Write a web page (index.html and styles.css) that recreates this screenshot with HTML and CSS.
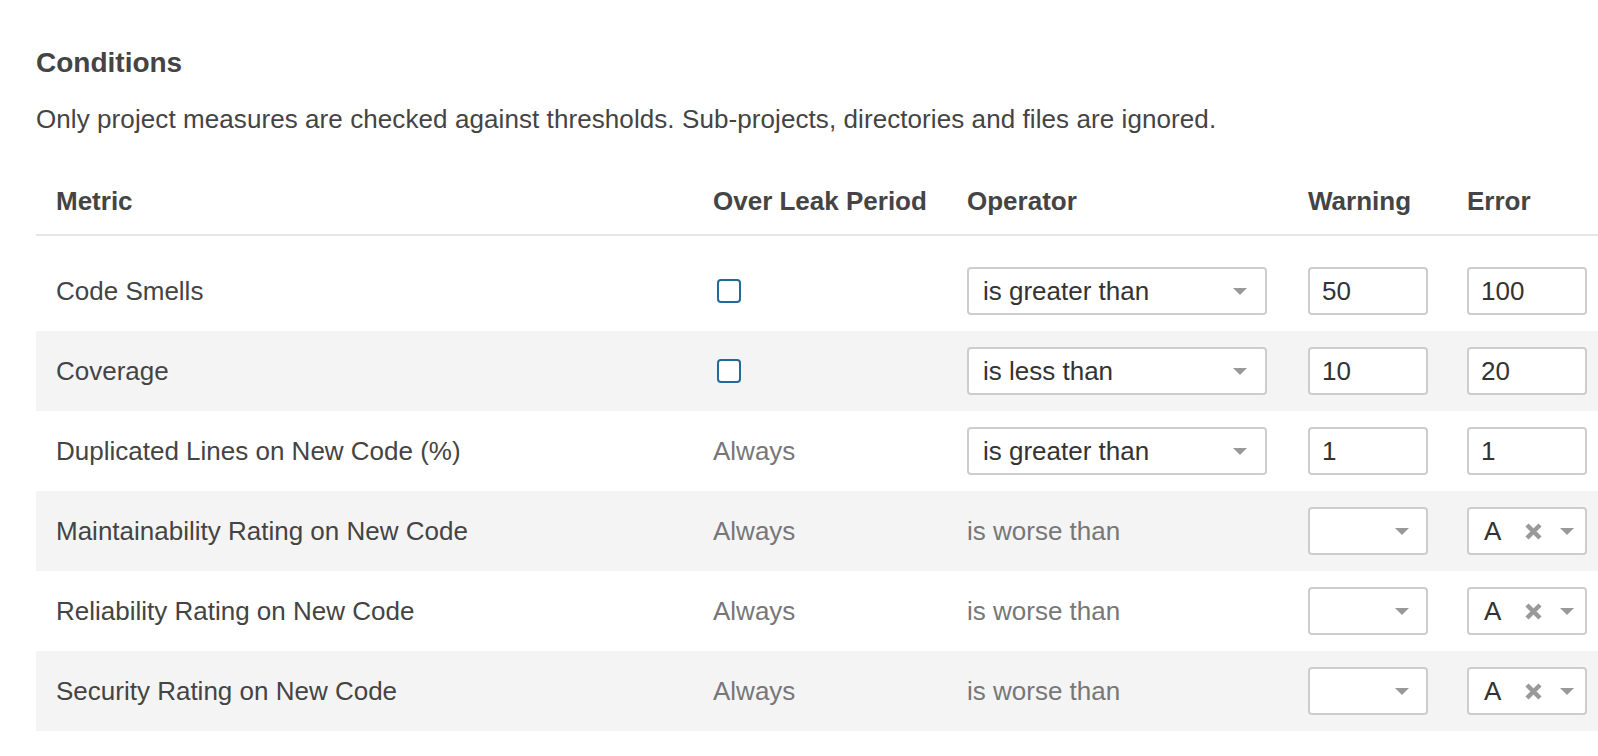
FILE: index.html
```html
<!DOCTYPE html>
<html lang="en">
<head>
    <meta charset="UTF-8">
    <meta name="viewport" content="width=device-width, initial-scale=1.0">
    <title>Quality Gate Conditions</title>
    <link rel="stylesheet" href="styles.css">
</head>
<body>
    <div class="page">
        <h3 class="conditions-title">Conditions</h3>
        <p class="conditions-note">Only project measures are checked against thresholds. Sub-projects, directories and files are ignored.</p>

        <table class="conditions-table">
            <colgroup>
                <col class="col-metric">
                <col class="col-leak">
                <col class="col-operator">
                <col class="col-warning">
                <col class="col-error">
            </colgroup>
            <thead>
                <tr>
                    <th>Metric</th>
                    <th>Over Leak Period</th>
                    <th>Operator</th>
                    <th>Warning</th>
                    <th>Error</th>
                </tr>
            </thead>
            <tbody>
                <tr>
                    <td>Code Smells</td>
                    <td><span class="checkbox"></span></td>
                    <td>
                        <div class="select">
                            <span class="select-value">is greater than</span>
                            <span class="select-arrow"></span>
                        </div>
                    </td>
                    <td><input class="threshold" type="text" value="50"></td>
                    <td><input class="threshold" type="text" value="100"></td>
                </tr>
                <tr>
                    <td>Coverage</td>
                    <td><span class="checkbox"></span></td>
                    <td>
                        <div class="select">
                            <span class="select-value">is less than</span>
                            <span class="select-arrow"></span>
                        </div>
                    </td>
                    <td><input class="threshold" type="text" value="10"></td>
                    <td><input class="threshold" type="text" value="20"></td>
                </tr>
                <tr>
                    <td>Duplicated Lines on New Code (%)</td>
                    <td class="muted">Always</td>
                    <td>
                        <div class="select">
                            <span class="select-value">is greater than</span>
                            <span class="select-arrow"></span>
                        </div>
                    </td>
                    <td><input class="threshold" type="text" value="1"></td>
                    <td><input class="threshold" type="text" value="1"></td>
                </tr>
                <tr>
                    <td>Maintainability Rating on New Code</td>
                    <td class="muted">Always</td>
                    <td class="muted">is worse than</td>
                    <td>
                        <div class="select rating">
                            <span class="select-value"></span>
                            <span class="select-arrow"></span>
                        </div>
                    </td>
                    <td>
                        <div class="select rating filled">
                            <span class="select-value">A</span>
                            <svg class="select-clear" width="17" height="17" viewBox="0 0 17 17"><path d="M2 2 15 15M15 2 2 15"/></svg>
                            <span class="select-arrow"></span>
                        </div>
                    </td>
                </tr>
                <tr>
                    <td>Reliability Rating on New Code</td>
                    <td class="muted">Always</td>
                    <td class="muted">is worse than</td>
                    <td>
                        <div class="select rating">
                            <span class="select-value"></span>
                            <span class="select-arrow"></span>
                        </div>
                    </td>
                    <td>
                        <div class="select rating filled">
                            <span class="select-value">A</span>
                            <svg class="select-clear" width="17" height="17" viewBox="0 0 17 17"><path d="M2 2 15 15M15 2 2 15"/></svg>
                            <span class="select-arrow"></span>
                        </div>
                    </td>
                </tr>
                <tr>
                    <td>Security Rating on New Code</td>
                    <td class="muted">Always</td>
                    <td class="muted">is worse than</td>
                    <td>
                        <div class="select rating">
                            <span class="select-value"></span>
                            <span class="select-arrow"></span>
                        </div>
                    </td>
                    <td>
                        <div class="select rating filled">
                            <span class="select-value">A</span>
                            <svg class="select-clear" width="17" height="17" viewBox="0 0 17 17"><path d="M2 2 15 15M15 2 2 15"/></svg>
                            <span class="select-arrow"></span>
                        </div>
                    </td>
                </tr>
            </tbody>
        </table>
    </div>
</body>
</html>
```

FILE: styles.css
```css
html, body {
    margin: 0;
    overflow: hidden;
}

body {
    font-family: 'Liberation Sans', Arial, sans-serif;
    color: #444;
    background: #fff;
}

.page {
    padding: 46px 0 0 36px;
}

.conditions-title {
    margin: 0;
    font-size: 28px;
    line-height: 34px;
    font-weight: bold;
}

.conditions-note {
    margin: 23px 0 0 0;
    font-size: 26px;
    line-height: 32px;
    letter-spacing: 0.08px;
}

.conditions-table {
    margin-top: 30px;
    width: 1571px;
    table-layout: fixed;
    border-collapse: collapse;
    font-size: 26px;
    line-height: 32px;
}

.col-metric { width: 657px; }
.col-leak { width: 254px; }
.col-operator { width: 341px; }
.col-warning { width: 159px; }
.col-error { width: 160px; }

.conditions-table th {
    padding: 20px 20px 17px;
    text-align: left;
    font-weight: bold;
    white-space: nowrap;
    border-bottom: 2px solid #e6e6e6;
}

.conditions-table td {
    height: 80px;
    padding: 0 20px;
    vertical-align: middle;
    white-space: nowrap;
}

.conditions-table tbody tr:first-child td {
    padding-top: 15px;
}

.conditions-table tbody tr:nth-child(even) {
    background: #f4f4f4;
}

.muted {
    color: #777;
}

.checkbox {
    display: block;
    width: 20px;
    height: 20px;
    margin-left: 4px;
    border: 2px solid #236a97;
    border-radius: 4px;
    background: #fff;
}

.threshold {
    display: block;
    width: 120px;
    height: 48px;
    padding: 0 12px;
    box-sizing: border-box;
    border: 2px solid #cdcdcd;
    border-radius: 4px;
    background: #fff;
    font-family: inherit;
    font-size: 26px;
    color: #333;
    outline: none;
}

.select {
    display: flex;
    align-items: center;
    width: 300px;
    height: 48px;
    padding: 0 18px 0 14px;
    box-sizing: border-box;
    border: 2px solid #cdcdcd;
    border-radius: 4px;
    background: #fff;
    color: #333;
}

.select-value {
    flex: 1;
}

.select-arrow {
    width: 0;
    height: 0;
    border-left: 7px solid transparent;
    border-right: 7px solid transparent;
    border-top: 7px solid #999;
}

.select.rating {
    width: 120px;
    padding-right: 17px;
}

.select.rating.filled {
    padding: 0 11px 0 15px;
}

/* clear button of a filled rating select */
.select-clear {
    margin-right: 18px;
    fill: none;
    stroke: #999;
    stroke-width: 4.5;
}
```
